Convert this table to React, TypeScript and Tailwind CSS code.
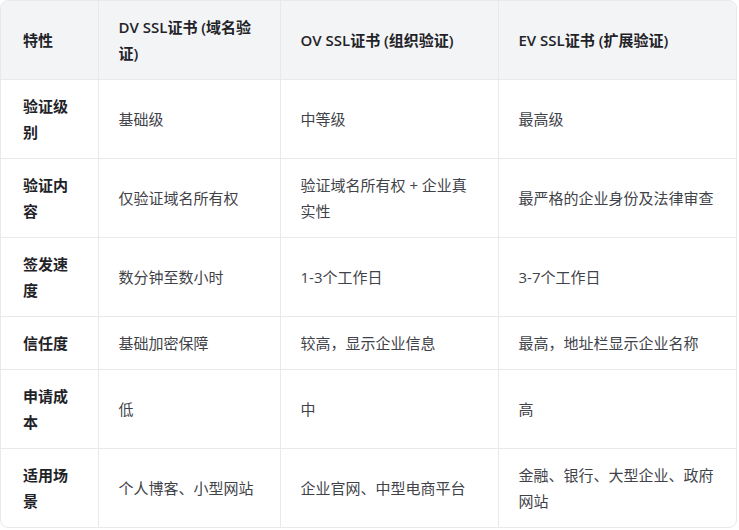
const headers = ["特性", "DV SSL证书 (域名验证)", "OV SSL证书 (组织验证)", "EV SSL证书 (扩展验证)"];

const rows = [
    ["验证级别", "基础级", "中等级", "最高级"],
    ["验证内容", "仅验证域名所有权", "验证域名所有权 + 企业真实性", "最严格的企业身份及法律审查"],
    ["签发速度", "数分钟至数小时", "1-3个工作日", "3-7个工作日"],
    ["信任度", "基础加密保障", "较高，显示企业信息", "最高，地址栏显示企业名称"],
    ["申请成本", "低", "中", "高"],
    ["适用场景", "个人博客、小型网站", "企业官网、中型电商平台", "金融、银行、大型企业、政府网站"],
];

const widths = ["w-[97px]", "w-[182px]", "w-[218px]", "w-[239px]"];

export default function App() {
    return (
        <div className="bg-white font-['Open_Sans','Noto_Sans_CJK_SC',sans-serif] text-[15px] leading-[26px]">
            <div className="w-[737px] overflow-hidden rounded-lg border border-[#e8e9eb]">
                <table className="w-full table-fixed border-collapse">
                    <colgroup>
                        {widths.map((w) => (
                            <col key={w} className={w} />
                        ))}
                    </colgroup>
                    <thead>
                        <tr className="bg-[#f3f4f6]">
                            {headers.map((h, i) => (
                                <th
                                    key={h}
                                    className={`py-[13px] text-left font-semibold text-[#1f2328] ${
                                        i === 0 ? "pl-[22px] pr-[18px]" : "px-5"
                                    } ${i < 3 ? "border-r border-[#e8e9eb]" : ""}`}
                                >
                                    {h}
                                </th>
                            ))}
                        </tr>
                    </thead>
                    <tbody>
                        {rows.map((r) => (
                            <tr key={r[0]} className="border-t border-[#e8e9eb]">
                                {r.map((c, i) => (
                                    <td
                                        key={i}
                                        className={`py-[13px] align-middle ${
                                            i === 0
                                                ? "pl-[22px] pr-[18px] font-semibold text-[#1f2328]"
                                                : "px-5 text-[#3f4349]"
                                        } ${i < 3 ? "border-r border-[#e8e9eb]" : ""}`}
                                    >
                                        {c}
                                    </td>
                                ))}
                            </tr>
                        ))}
                    </tbody>
                </table>
            </div>
        </div>
    );
}
